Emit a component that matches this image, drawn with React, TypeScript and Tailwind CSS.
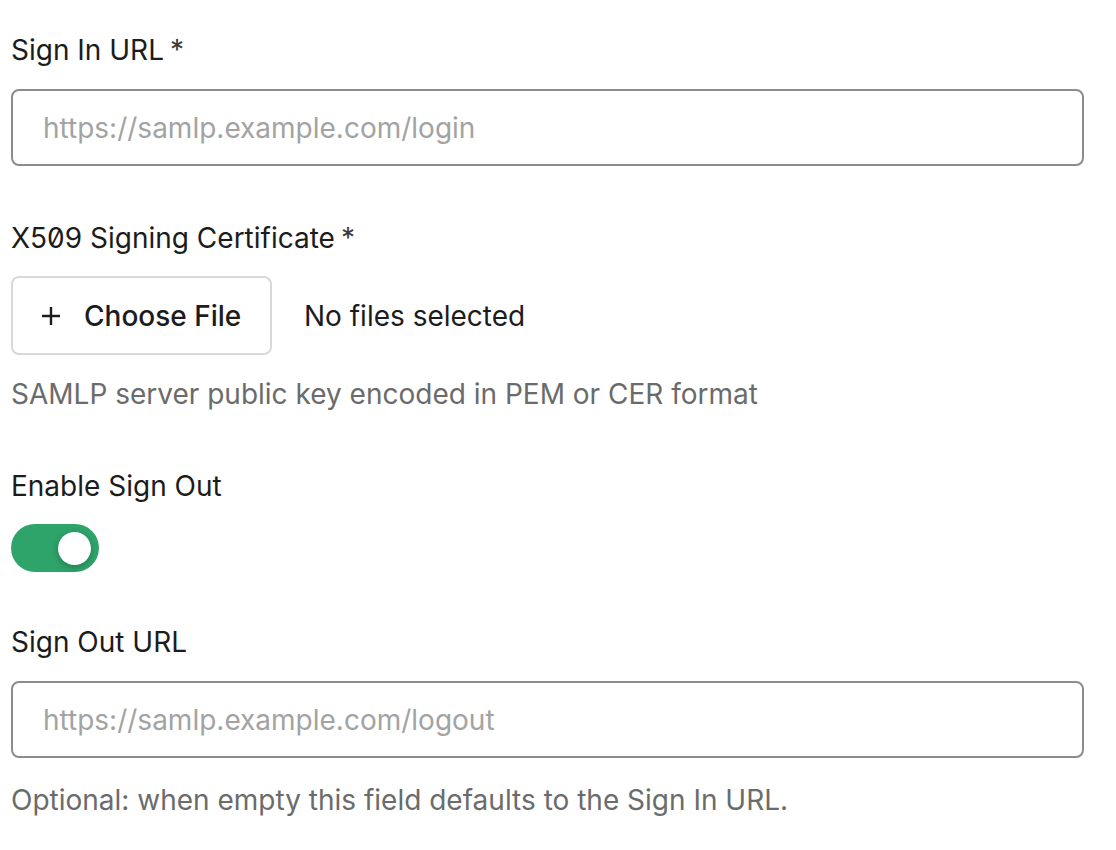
import React from "react";

function Label({ children, required }: { children: React.ReactNode; required?: boolean }) {
  return (
    <div className="text-[28px] leading-[36px] text-[#1c1c1c] font-normal">
      {children}
      {required && <span className="ml-[6px] text-[#3a3a3a]">*</span>}
    </div>
  );
}

export default function App() {
  return (
    <div
      className="min-h-[850px] w-[1116px] bg-white pl-[11px] pr-[32px] pt-[32px]"
      style={{ fontFamily: "Inter, 'Noto Sans', sans-serif" }}
    >
      <Label required>Sign In URL</Label>
      <div className="mt-[21px] flex h-[77px] items-center rounded-[8px] border-2 border-[#8c8c8c] pl-[30px]">
        <span className="text-[28px] text-[#a3a3a3]">https://samlp.example.com/login</span>
      </div>

      <div className="mt-[54px]">
        <Label required>
          <span className="[font-feature-settings:'zero']">X509</span> Signing Certificate
        </Label>
      </div>
      <div className="mt-[20px] flex items-center">
        <div className="flex h-[79px] w-[261px] items-center rounded-[8px] border-2 border-[#d9d9d9] pl-[28px]">
          <svg width="20" height="20" viewBox="0 0 20 20" className="text-[#1c1c1c]">
            <path d="M10 1v18M1 10h18" stroke="currentColor" strokeWidth="2.4" fill="none" />
          </svg>
          <span className="ml-[23px] text-[28px] font-medium text-[#1c1c1c]">Choose File</span>
        </div>
        <span className="ml-[32px] text-[28px] text-[#1c1c1c]">No files selected</span>
      </div>
      <div className="mt-[21px] text-[28px] leading-[36px] text-[#6b6b6b]">
        SAMLP server public key encoded in PEM or CER format
      </div>

      <div className="mt-[56px]">
        <Label>Enable Sign Out</Label>
      </div>
      <div className="mt-[20px] flex h-[48px] w-[88px] items-center justify-end rounded-full bg-[#2ea36a] pr-[8px]">
        <div className="h-[33px] w-[33px] rounded-full bg-white shadow-[0_2px_6px_rgba(0,0,0,0.25)]" />
      </div>

      <div className="mt-[52px]">
        <Label>Sign Out URL</Label>
      </div>
      <div className="mt-[21px] flex h-[77px] items-center rounded-[8px] border-2 border-[#8c8c8c] pl-[30px]">
        <span className="text-[28px] text-[#a3a3a3]">https://samlp.example.com/logout</span>
      </div>
      <div className="mt-[24px] text-[28px] leading-[36px] text-[#6b6b6b]">
        Optional: when empty this field defaults to the Sign In URL.
      </div>
    </div>
  );
}
